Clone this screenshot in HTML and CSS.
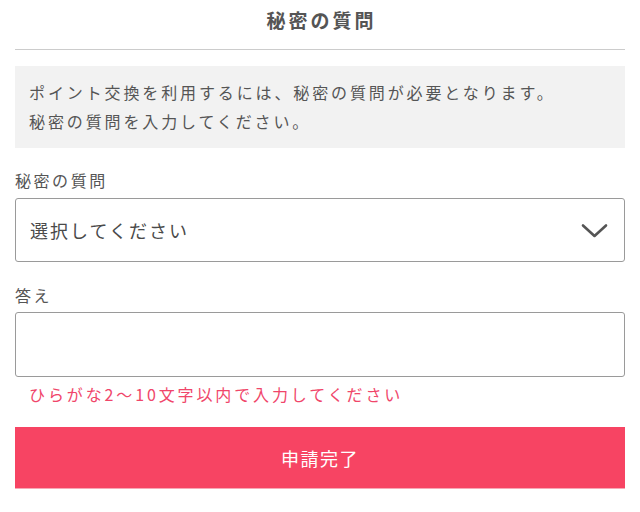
FILE: index.html
```html
<!DOCTYPE html>
<html lang="ja">
<head>
<meta charset="utf-8">
<title>秘密の質問</title>
<link rel="stylesheet" href="styles.css">
</head>
<body>
<div class="page">
  <header class="header">
    <h1 class="title">秘密の質問</h1>
  </header>
  <div class="notice">
    <p>ポイント交換を利用するには、秘密の質問が必要となります。</p>
    <p>秘密の質問を入力してください。</p>
  </div>
  <form class="form">
    <label class="label label-first">秘密の質問</label>
    <div class="select">
      <span class="select-text">選択してください</span>
      <svg class="chevron" width="27" height="16" viewBox="0 0 27 16"><polyline points="2,2.5 13.5,13 25,2.5" fill="none" stroke="#555" stroke-width="2.6" stroke-linecap="round" stroke-linejoin="round"/></svg>
    </div>
    <label class="label">答え</label>
    <div class="input"></div>
    <p class="error">ひらがな2〜10文字以内で入力してください</p>
    <button type="button" class="submit">申請完了</button>
  </form>
</div>
</body>
</html>
```
FILE: styles.css
```css
* { box-sizing: border-box; }
html, body { margin: 0; padding: 0; background: #fff; }
body {
  font-family: "Noto Sans CJK JP", "Noto Sans", sans-serif;
  color: #555;
}
.page { padding: 0 15px; }
.header {
  height: 50px;
  border-bottom: 1px solid #cccccc;
}
.title {
  margin: 0;
  height: 40px;
  line-height: 40px;
  text-align: center;
  font-size: 19px;
  font-weight: bold;
  letter-spacing: 3px;
  color: #555;
  padding-left: 3px;
}
.notice {
  margin-top: 16px;
  background: #f2f2f2;
  padding: 12px 14px 12px;
  font-size: 16px;
  line-height: 29px;
  letter-spacing: 0.18em;
  color: #555;
}
.notice p { margin: 0; }
.form { display: flex; flex-direction: column; }
.label {
  display: block;
  font-size: 16px;
  line-height: 28px;
  letter-spacing: 0.16em;
  color: #555;
  margin-top: 19px;
}
.label-first { margin-top: 18px; }
.select {
  margin-top: 4px;
  height: 64px;
  border: 1px solid #9a9a9a;
  border-radius: 3px;
  display: flex;
  align-items: center;
  justify-content: space-between;
  padding: 0 16px 0 14px;
}
.select-text {
  font-size: 18px;
  letter-spacing: 2px;
  color: #4a4a4a;
}
.chevron { display: block; margin-top: 1px; }
.input {
  margin-top: 3px;
  height: 65px;
  border: 1px solid #9a9a9a;
  border-radius: 3px;
}
.error {
  margin: 3px 0 0;
  padding-left: 14px;
  font-size: 16px;
  line-height: 28px;
  letter-spacing: 0.18em;
  color: #f0466a;
}
.submit {
  margin-top: 19px;
  height: 62px;
  border: 0;
  border-bottom: 1px solid #f7a8b6;
  background: #f74463;
  color: #fff;
  font-family: "Noto Sans CJK JP", "Noto Sans", sans-serif;
  font-size: 18px;
  letter-spacing: 1.5px;
  padding: 0;
}
```
